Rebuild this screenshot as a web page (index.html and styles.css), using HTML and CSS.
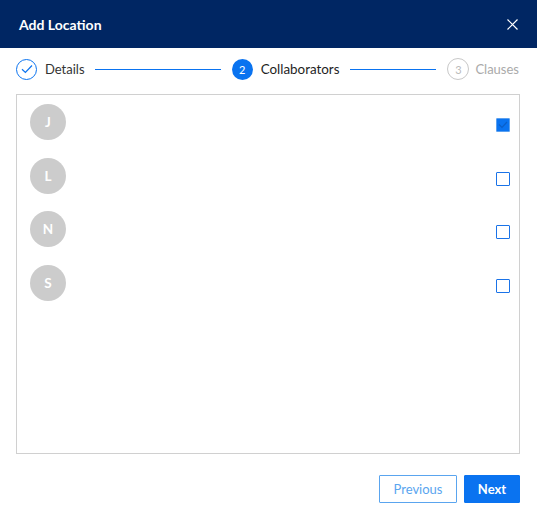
FILE: index.html
```html
<!DOCTYPE html>
<html>
<head>
<meta charset="utf-8">
<link rel="stylesheet" href="styles.css">
</head>
<body>
<div class="dialog">
  <header class="header">
    <h1 class="title">Add Location</h1>
    <button class="close" aria-label="Close">
      <svg width="11" height="11" viewBox="0 0 11 11"><path d="M0.5 0.5L10.5 10.5M10.5 0.5L0.5 10.5" stroke="#fff" stroke-width="1.2" fill="none"/></svg>
    </button>
  </header>
  <nav class="stepper">
    <div class="step done">
      <span class="dot"><svg width="12" height="10" viewBox="0 0 12 10"><path d="M1 5.2L4.4 8.5L11 1.5" stroke="#0a73f0" stroke-width="1.2" fill="none"/></svg></span>
      <span class="label">Details</span>
      <span class="line"></span>
    </div>
    <div class="step active">
      <span class="dot">2</span>
      <span class="label">Collaborators</span>
      <span class="line"></span>
    </div>
    <div class="step todo">
      <span class="dot">3</span>
      <span class="label">Clauses</span>
    </div>
  </nav>
  <section class="list">
    <div class="row"><span class="avatar">J</span><span class="check checked"><svg width="10" height="8" viewBox="0 0 10 8"><path d="M1 3.5L4 6.5L9 1" stroke="#0a5fc9" stroke-width="1.2" fill="none"/></svg></span></div>
    <div class="row"><span class="avatar">L</span><span class="check"></span></div>
    <div class="row"><span class="avatar">N</span><span class="check"></span></div>
    <div class="row"><span class="avatar">S</span><span class="check"></span></div>
  </section>
  <footer class="footer">
    <button class="btn btn-outline">Previous</button>
    <button class="btn btn-primary">Next</button>
  </footer>
</div>
</body>
</html>
```
FILE: styles.css
```css
* { box-sizing: border-box; }
html, body { margin: 0; padding: 0; background: #fff; }
body { font-family: Lato, "Open Sans", sans-serif; width: 537px; height: 521px; overflow: hidden; }
.dialog { display: flex; flex-direction: column; }
.header {
  height: 48px;
  background: #002663;
  display: flex;
  align-items: center;
  justify-content: space-between;
  padding: 0 19px 0 19px;
}
.title { margin: 0; color: #fff; font-size: 14px; font-weight: 700; }
.close { background: none; border: 0; padding: 0; width: 11px; height: 11px; display: flex; margin-top: 1px; }
.stepper {
  display: flex;
  align-items: center;
  height: 42px;
  padding: 0 18px 0 16px;
}
.step { display: flex; align-items: center; gap: 8px; font-size: 13px; }
.step.done, .step.active { flex: 1; }
.step.todo { gap: 6px; }
.dot {
  flex: none;
  width: 21px; height: 21px; border-radius: 50%;
  display: flex; align-items: center; justify-content: center;
  font-size: 11px;
}
.done .dot { border: 1px solid #0a73f0; }
.done .label { color: #333; }
.active .dot { background: #0a73f0; color: #fff; }
.active .label { color: #1e1e1e; font-size: 13.4px; }
.todo .dot { border: 1px solid #c8c8c8; color: #bbb; width: 22px; height: 22px; }
.todo .label { color: #aaa; }
.line { flex: 1; height: 1px; background: #0a73f0; margin: 0 11px 0 2px; }
.list {
  margin: 4px 17px 0 16px;
  height: 360px;
  border: 1px solid #d0d0d0;
  padding: 9px 9px 0 13px;
  display: flex;
  flex-direction: column;
}
.row { display: flex; justify-content: space-between; height: 53.67px; align-items: flex-start; }
.avatar {
  width: 36px; height: 36px; border-radius: 50%;
  background: #cccccc; color: #fff; font-weight: 700; font-size: 13.5px;
  display: flex; align-items: center; justify-content: center;
}
.check {
  width: 14px; height: 14px; border: 1px solid #1a73e8; border-radius: 1px;
  margin-top: 14px; display: flex; align-items: center; justify-content: center;
}
.check.checked { background: #0a73f0; border-color: #5aa0f0; }
.footer {
  display: flex; justify-content: flex-end; gap: 7px;
  padding: 21px 17px 0 0;
}
.btn {
  height: 28px; font-family: inherit; font-size: 13px; border-radius: 1px; padding: 0; cursor: pointer;
}
.btn-outline { width: 78px; background: #fff; border: 1px solid #5aa5ef; color: #5aa5ef; }
.btn-primary { width: 56px; background: #0a73f0; border: 1px solid #0a73f0; color: #fff; font-weight: 700; }
```
